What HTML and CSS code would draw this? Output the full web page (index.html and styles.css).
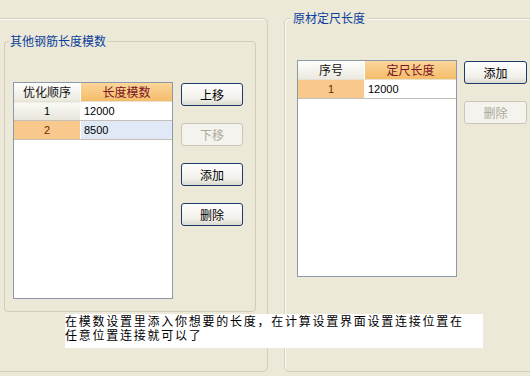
FILE: index.html
```html
<!DOCTYPE html>
<html lang="zh">
<head>
  <meta charset="UTF-8">
  <title>钢筋长度设置</title>
  <link rel="stylesheet" href="styles.css">
</head>
<body>
<div class="window">
  <div class="panel panel-left">
    <div class="group">
      <span class="group-title">其他钢筋长度模数</span>
      <div class="group-body">
        <div class="grid">
          <table>
            <tr><th class="col-a">优化顺序</th><th class="col-b">长度模数</th></tr>
            <tr><td class="col-a">1</td><td class="col-b">12000</td></tr>
            <tr class="selected"><td class="col-a">2</td><td class="col-b">8500</td></tr>
          </table>
        </div>
        <div class="buttons">
          <button>上移</button>
          <button disabled>下移</button>
          <button>添加</button>
          <button>删除</button>
        </div>
      </div>
    </div>
  </div>

  <div class="panel panel-right">
    <span class="group-title">原材定尺长度</span>
    <div class="group-body right-body">
      <div class="grid">
        <table>
          <tr><th class="col-a">序号</th><th class="col-b">定尺长度</th></tr>
          <tr class="current"><td class="col-a">1</td><td class="col-b">12000</td></tr>
        </table>
      </div>
      <div class="buttons">
        <button>添加</button>
        <button disabled>删除</button>
      </div>
    </div>
  </div>

  <!-- note box drawn over both panels -->
  <div class="note">在模数设置里添入你想要的长度，在计算设置界面设置连接位置在<br>任意位置连接就可以了</div>
</div>
</body>
</html>
```

FILE: styles.css
```css
body {
  margin: 0;
  background: #ece9d8;
  font-family: "Noto Sans CJK SC", "Liberation Sans", sans-serif;
  font-size: 12px;
  overflow: hidden;
}
.window {
  position: relative;
  display: flex;
  height: 376px;
  padding-top: 18px;
  box-sizing: border-box;
}
.panel {
  height: 354px;
  box-sizing: border-box;
  border: 1px solid #d3cfbc;
  border-radius: 5px;
  box-shadow: inset 1px 1px 0 #fbfaf6;
}
.panel-left {
  width: 272px;
  margin-left: -4px;
  flex-shrink: 0;
}
.panel-right {
  width: 260px;
  margin-left: 16px;
  flex-shrink: 0;
}
.group {
  width: 252px;
  height: 271px;
  margin: 22px 0 0 7px;
  box-sizing: border-box;
  border: 1px solid #d0ccb8;
  border-radius: 4px;
}
.group-title {
  display: block;
  width: fit-content;
  height: 14px;
  margin: -8px 0 0 4px;
  padding: 0 1px;
  background: #ece9d8;
  color: #0b3f9c;
  line-height: 14px;
}
.panel-right .group-title {
  margin-left: 6px;
  padding: 0 2px;
}
.group-body {
  display: flex;
  gap: 8px;
  margin-top: 34px;
  padding-left: 8px;
}
.right-body {
  margin-top: 35px;
  padding-left: 12px;
  gap: 7px;
}
.grid {
  width: 160px;
  height: 217px;
  box-sizing: border-box;
  border: 1px solid #8c99a8;
  background: #fff;
}
table {
  width: 100%;
  border-collapse: collapse;
}
th, td {
  height: 18px;
  padding: 0;
  font-weight: normal;
  line-height: 18px;
  border-bottom: 1px solid #c4c2b8;
}
th {
  border-bottom: 1px solid #e6e2cf;
}
.col-a {
  width: 66px;
  text-align: center;
  border-right: 1px solid #fff;
}
th.col-a {
  background: linear-gradient(#fefefd, #ebe9df);
  color: #111;
}
th.col-b {
  background: linear-gradient(#fbd59a, #f4bd6a);
  color: #7b1424;
}
td {
  font-family: "Liberation Sans", sans-serif;
  font-size: 11px;
  color: #000;
}
td.col-a {
  background: linear-gradient(#faf9f4, #e7e5db);
}
td.col-b {
  text-align: left;
  padding-left: 3px;
}
tr.selected td.col-a,
tr.current td.col-a {
  background: #f8c88c;
  color: #6b2a00;
}
tr.selected td.col-b {
  background: #e1e9f7;
}
.buttons {
  display: flex;
  flex-direction: column;
  gap: 17px;
  padding-top: 1px;
}
button {
  width: 62px;
  height: 23px;
  padding: 0;
  font-family: "Noto Sans CJK SC", sans-serif;
  font-size: 12px;
  color: #000;
  border: 1px solid #1c3b6a;
  border-radius: 3px;
  background: linear-gradient(#ffffff, #f1f0ea 70%, #dcd9cf);
}
.right-body button {
  width: 63px;
}
button:disabled {
  color: #aca899;
  border-color: #cac7b9;
  background: #f4f3ee;
}
.note {
  position: absolute;
  left: 65px;
  top: 314px;
  width: 418px;
  height: 34px;
  box-sizing: border-box;
  padding-top: 1px;
  background: #fff;
  color: #000;
  font-family: "Liberation Sans", "Noto Sans CJK SC", sans-serif;
  font-size: 12px;
  line-height: 14px;
  letter-spacing: 1.75px;
  white-space: nowrap;
}
```
